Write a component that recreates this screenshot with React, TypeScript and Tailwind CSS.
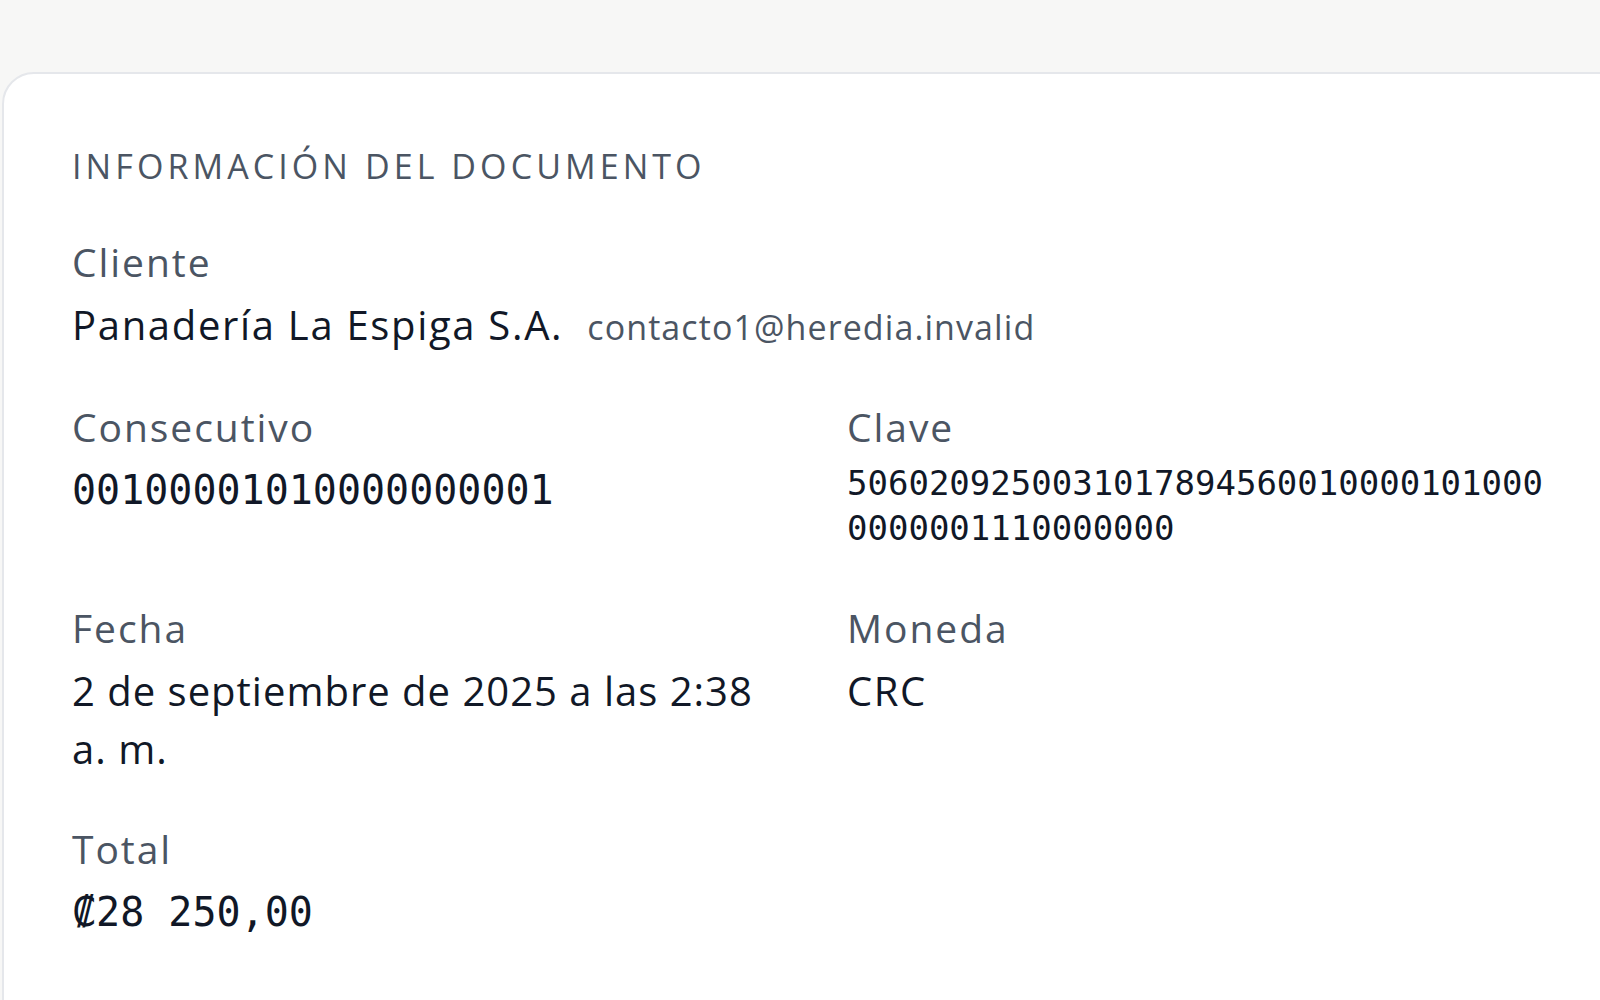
const sans = "font-['Open_Sans',_'Noto_Sans',_sans-serif]";

const Field = ({
  label,
  children,
}: {
  label: string;
  children: React.ReactNode;
}) => {
  return (
    <div className="flex flex-col">
      <div className="text-[39px] leading-[52px] tracking-[0.05em] text-[#4b5563] mb-[8px]">
        {label}
      </div>
      {children}
    </div>
  );
};

export default function App() {
  return (
    <div
      className={`${sans} min-h-screen w-full overflow-hidden bg-[#f7f7f6] pt-[72px] pl-[2px]`}
    >
      <div className="w-[1622px] min-h-[960px] rounded-tl-[32px] border-2 border-[#e5e7eb] bg-white p-[68px]">
        <h2 className="text-[34px] leading-[48px] uppercase tracking-[0.12em] text-[#4b5563]">
          Información del documento
        </h2>

        <div className="mt-[46px] grid grid-cols-2 gap-x-[68px] gap-y-[45px]">
          <div className="col-span-2">
            <Field label="Cliente">
              <div className="flex items-baseline gap-[24px] leading-[58px]">
                <span className="text-[40px] tracking-[0.042em] text-[#111827]">
                  Panadería La Espiga S.A.
                </span>
                <span className="text-[34px] tracking-[0.032em] text-[#4b5563]">
                  contacto1@heredia.invalid
                </span>
              </div>
            </Field>
          </div>

          <Field label="Consecutivo">
            <div className="font-['DejaVu_Sans_Mono',_monospace] text-[40px] leading-[58px] text-[#111827]">
              00100001010000000001
            </div>
          </Field>
          <Field label="Clave">
            <div className="font-['DejaVu_Sans_Mono',_monospace] text-[34px] leading-[45px] pb-[6px] break-all text-[#111827]">
              50602092500310178945600100001010000000001110000000
            </div>
          </Field>

          <Field label="Fecha">
            <div className="text-[40px] leading-[58px] tracking-[0.025em] text-[#111827]">
              2 de septiembre de 2025 a las 2:38 a. m.
            </div>
          </Field>
          <Field label="Moneda">
            <div className="text-[40px] leading-[58px] tracking-[0.04em] text-[#111827]">
              CRC
            </div>
          </Field>

          <div className="col-span-2">
            <Field label="Total">
              <div className="font-['DejaVu_Sans_Mono',_monospace] text-[40px] leading-[58px] text-[#111827]">
                ₡28 250,00
              </div>
            </Field>
          </div>
        </div>
      </div>
    </div>
  );
}
